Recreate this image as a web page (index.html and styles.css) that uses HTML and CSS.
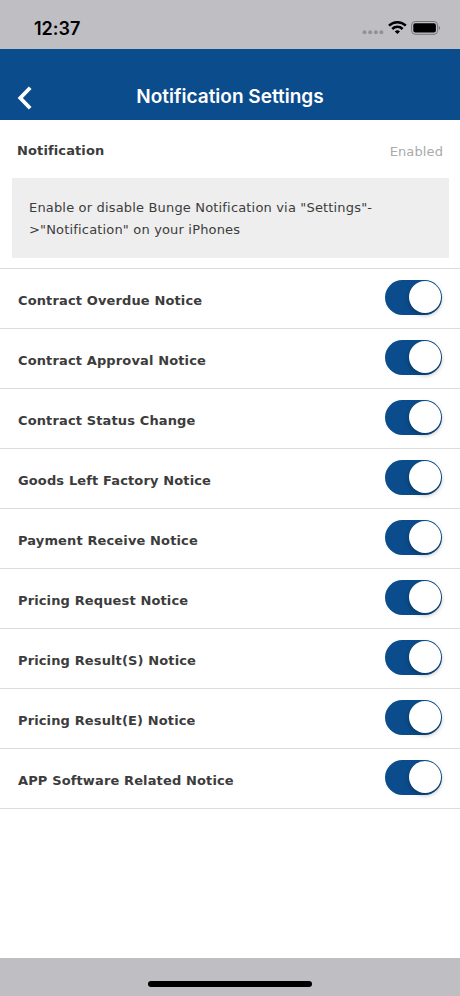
FILE: index.html
```html
<!DOCTYPE html>
<html lang="en">
  <head>
    <meta charset="UTF-8" />
    <meta name="viewport" content="width=device-width, initial-scale=1.0" />
    <title>Notification Settings</title>
    <link rel="stylesheet" href="styles.css">
  </head>
  <body>
    <div class="status-bar">
      <span class="time">12:37</span>
      <svg class="status-icons" width="78" height="16" viewBox="0 0 78 16">
        <g fill="#929296">
          <circle cx="2.5" cy="12.3" r="2" />
          <circle cx="8.2" cy="12.3" r="2" />
          <circle cx="13.9" cy="12.3" r="2" />
          <circle cx="19.4" cy="12.3" r="2" />
        </g>
        <g fill="none" stroke="#000" stroke-width="2.5">
          <path d="M27 5.6a12 12 0 0 1 16.8 0" />
          <path d="M30.2 9a7.4 7.4 0 0 1 10.4 0" />
        </g>
        <path d="M35.4 14.1l-2.6-2.7a3.8 3.8 0 0 1 5.2 0z" />
        <rect x="49.6" y="1.5" width="26" height="12.8" rx="3.6" fill="none" stroke="#77777b" />
        <rect x="51.3" y="3.2" width="22.6" height="9.4" rx="2" />
        <path d="M76.8 5.8c1.6.8 1.6 3.4 0 4.2z" fill="#77777b" />
      </svg>
    </div>

    <header class="navbar">
      <button class="btn-back" aria-label="Back">
        <svg width="16" height="24" viewBox="0 0 16 24">
          <path d="M13.2 1.7L3.3 12l9.9 10.3" fill="none" stroke="#fff" stroke-width="3.8" />
        </svg>
      </button>
      <h1>Notification Settings</h1>
    </header>

    <main class="content">
      <section class="intro">
        <div class="intro-head">
          <h2>Notification</h2>
          <span class="state">Enabled</span>
        </div>
        <p class="hint">Enable or disable Bunge Notification via "Settings"-<br>&gt;"Notification" on your iPhones</p>
      </section>

      <ul class="settings">
        <li><span>Contract Overdue Notice</span><button class="switch" role="switch" aria-checked="true"></button></li>
        <li><span>Contract Approval Notice</span><button class="switch" role="switch" aria-checked="true"></button></li>
        <li><span>Contract Status Change</span><button class="switch" role="switch" aria-checked="true"></button></li>
        <li><span>Goods Left Factory Notice</span><button class="switch" role="switch" aria-checked="true"></button></li>
        <li><span>Payment Receive Notice</span><button class="switch" role="switch" aria-checked="true"></button></li>
        <li><span>Pricing Request Notice</span><button class="switch" role="switch" aria-checked="true"></button></li>
        <li><span>Pricing Result(S) Notice</span><button class="switch" role="switch" aria-checked="true"></button></li>
        <li><span>Pricing Result(E) Notice</span><button class="switch" role="switch" aria-checked="true"></button></li>
        <li><span>APP Software Related Notice</span><button class="switch" role="switch" aria-checked="true"></button></li>
      </ul>
    </main>

    <footer class="home-area">
      <div class="home-bar"></div>
    </footer>
  </body>
</html>
```
FILE: styles.css
```css
* {
  margin: 0;
  padding: 0;
  box-sizing: border-box;
}

body {
  height: 996px;
  display: flex;
  flex-direction: column;
  background: #fff;
  color: #3c3c3c;
  font-family: Verdana, 'DejaVu Sans', sans-serif;
  font-size: 13px;
  font-variant-ligatures: none;
  overflow: hidden;
}

button {
  border: none;
  background: none;
  cursor: pointer;
}

.status-bar {
  height: 49px;
  padding: 6px 20px 0 34px;
  display: flex;
  justify-content: space-between;
  align-items: center;
  background: #bfbec3;
}

.time {
  padding-top: 1px;
  color: #000;
  font-family: Inter, sans-serif;
  font-size: 18px;
  font-weight: 600;
}

.navbar {
  height: 71px;
  padding: 23px 17px 0;
  display: grid;
  grid-template-columns: 18px 1fr 18px;
  align-items: center;
  background: #0b4d8c;
}

.btn-back {
  height: 24px;
  margin-top: 3px;
}

.btn-back svg {
  display: block;
}

h1 {
  text-align: center;
  color: #fff;
  font-family: Inter, sans-serif;
  font-size: 19px;
  font-weight: 600;
}

.content {
  flex: 1;
}

.intro {
  height: 149px;
  padding: 20px 11px 0;
  border-bottom: 1px solid #dcdcdc;
}

.intro-head {
  height: 38px;
  padding: 0 6px;
  display: flex;
  justify-content: space-between;
  line-height: 21px;
}

h2 {
  font-size: 13px;
  letter-spacing: 0.12px;
}

.state {
  padding-top: 1px;
  color: #aaa;
  letter-spacing: 0.12px;
}

.hint {
  height: 80px;
  margin-left: 1px;
  padding: 19px 17px;
  background: #eee;
  letter-spacing: 0.17px;
  line-height: 22px;
}

.settings {
  list-style: none;
}

.settings li {
  height: 60px;
  padding: 0 18px;
  display: flex;
  justify-content: space-between;
  align-items: center;
  border-bottom: 1px solid #dcdcdc;
  font-weight: bold;
  letter-spacing: 0.13px;
}

.settings span {
  padding-top: 3px;
}

.switch {
  width: 57px;
  height: 35px;
  margin-bottom: 3px;
  padding: 1.5px;
  display: flex;
  justify-content: flex-end;
  border-radius: 18px;
  background: #0b4d8c;
}

.switch::after {
  content: '';
  width: 32px;
  height: 32px;
  border-radius: 50%;
  background: #fff;
  box-shadow: 0 2px 5px rgba(0, 0, 0, 0.3);
}

.home-area {
  height: 38px;
  padding-top: 23px;
  background: #bfbec3;
}

.home-bar {
  width: 164px;
  height: 6px;
  margin: 0 auto;
  border-radius: 3px;
  background: #000;
}
```
